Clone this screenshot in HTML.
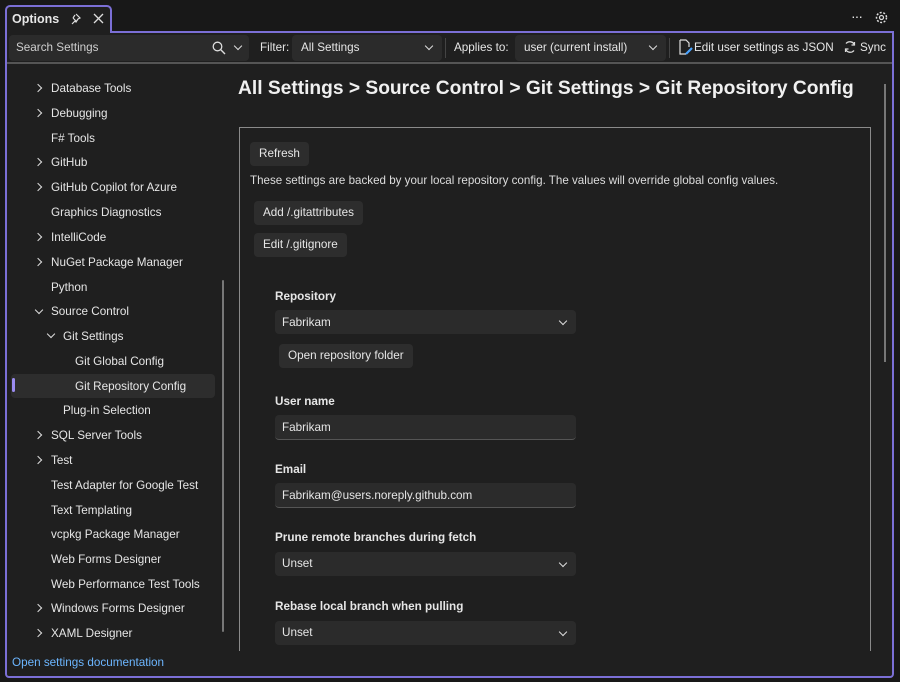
<!DOCTYPE html>
<html><head><style>
*{box-sizing:border-box;margin:0;padding:0}
body{width:900px;height:682px;background:#181818;font-family:"Liberation Sans",sans-serif;color:#e6e6e6;font-size:11.7px;position:relative;overflow:hidden}
.a{position:absolute;white-space:nowrap}
.frame{position:absolute;left:5px;top:31px;width:889px;height:647px;border:2px solid #7b6fd6;background:#1f1f1f;border-radius:0 0 4px 4px}
.tab{position:absolute;left:5px;top:5px;width:107px;height:28px;border:2px solid #7b6fd6;border-bottom:none;background:#1f1f1f;border-radius:5px 5px 0 0;z-index:2}
.box{position:absolute;background:#2b2b2b;border-radius:4px}
.btn{position:absolute;background:#2d2d2d;border-radius:4px;padding:0 9px;line-height:24px;height:24px}
.tree{left:51px}
.chev{position:absolute;width:6px;height:6px;border-right:1.4px solid #ddd;border-bottom:1.4px solid #ddd}
.lab{font-weight:bold;font-size:11.7px}
</style></head><body>
<div class="frame"></div>
<div class="tab"></div>
<div class="a" style="left:12px;top:12px;font-weight:bold;font-size:12.5px;z-index:3">Options</div>
<svg class="a" style="left:68px;top:12px;z-index:3" width="14" height="14" viewBox="0 0 14 14"><path d="M8 2l4 4-2 1-2 3-1-1-3 3M5 6l3 3M5 6l2-3" stroke="#ddd" fill="none" stroke-width="1.2"/></svg>
<svg class="a" style="left:93px;top:13px;z-index:3" width="11" height="11"><path d="M1 1L10 10M10 1L1 10" stroke="#ddd" stroke-width="1.3"/></svg>
<div class="a" style="left:851px;top:8px;font-size:14px;letter-spacing:-1px">···</div>
<svg class="a" style="left:875px;top:11px" width="13" height="13" viewBox="0 0 13 13"><circle cx="6.5" cy="6.5" r="2" fill="none" stroke="#ddd" stroke-width="1.2"/><circle cx="6.5" cy="6.5" r="5" fill="none" stroke="#ddd" stroke-width="1.5" stroke-dasharray="2 1.6"/></svg>
<div class="box" style="left:9px;top:35px;width:240px;height:26px"></div>
<div class="a" style="left:16px;top:41px;color:#cfcfcf">Search Settings</div>
<svg class="a" style="left:212px;top:41px" width="14" height="14"><circle cx="5.5" cy="5.5" r="4.3" fill="none" stroke="#ddd" stroke-width="1.3"/><path d="M8.8 8.8L13 13" stroke="#ddd" stroke-width="1.4"/></svg>
<div class="chev" style="left:235px;top:43px;transform:rotate(45deg)"></div>
<div class="a" style="left:260px;top:41px">Filter:</div>
<div class="box" style="left:292px;top:35px;width:150px;height:26px"></div>
<div class="a" style="left:301px;top:41px">All Settings</div>
<div class="chev" style="left:426px;top:43px;transform:rotate(45deg)"></div>
<div class="a" style="left:445px;top:38px;width:1px;height:20px;background:#444"></div>
<div class="a" style="left:454px;top:41px">Applies to:</div>
<div class="box" style="left:515px;top:35px;width:151px;height:26px"></div>
<div class="a" style="left:524px;top:41px">user (current install)</div>
<div class="chev" style="left:650px;top:43px;transform:rotate(45deg)"></div>
<div class="a" style="left:669px;top:38px;width:1px;height:20px;background:#444"></div>
<svg class="a" style="left:678px;top:39px" width="16" height="17"><path d="M2 1h6l3 3v4M2 1v14h6" stroke="#ddd" fill="none" stroke-width="1.2"/><path d="M8 15l6-6" stroke="#4aa3ff" stroke-width="2.2"/></svg>
<div class="a" style="left:694px;top:41px">Edit user settings as JSON</div>
<svg class="a" style="left:843px;top:40px" width="14" height="14"><path d="M3 3.5A5 5 0 0 1 11.5 5M11 10.5A5 5 0 0 1 2.5 9" stroke="#ddd" fill="none" stroke-width="1.3"/><path d="M11.5 2v3h-3M2.5 12V9h3" stroke="#ddd" fill="none" stroke-width="1.2"/></svg>
<div class="a" style="left:860px;top:41px">Sync</div>
<div class="a" style="left:7px;top:62px;width:885px;height:2px;background:#555"></div>
<div class="chev" style="left:35px;top:85px;transform:rotate(-45deg)"></div><div class="a tree" style="top:82px">Database Tools</div>
<div class="chev" style="left:35px;top:110px;transform:rotate(-45deg)"></div><div class="a tree" style="top:107px">Debugging</div>
<div class="a tree" style="top:132px">F# Tools</div>
<div class="chev" style="left:35px;top:159px;transform:rotate(-45deg)"></div><div class="a tree" style="top:156px">GitHub</div>
<div class="chev" style="left:35px;top:184px;transform:rotate(-45deg)"></div><div class="a tree" style="top:181px">GitHub Copilot for Azure</div>
<div class="a tree" style="top:206px">Graphics Diagnostics</div>
<div class="chev" style="left:35px;top:234px;transform:rotate(-45deg)"></div><div class="a tree" style="top:231px">IntelliCode</div>
<div class="chev" style="left:35px;top:259px;transform:rotate(-45deg)"></div><div class="a tree" style="top:256px">NuGet Package Manager</div>
<div class="a tree" style="top:281px">Python</div>
<div class="chev" style="left:36px;top:307px;transform:rotate(45deg)"></div><div class="a tree" style="top:305px">Source Control</div>
<div class="chev" style="left:48px;top:331px;transform:rotate(45deg)"></div><div class="a" style="left:63px;top:330px">Git Settings</div>
<div class="a" style="left:75px;top:355px">Git Global Config</div>
<div class="a" style="left:11px;top:374px;width:204px;height:24px;background:#2d2d2d;border-radius:4px"></div>
<div class="a" style="left:12px;top:378px;width:3px;height:14px;background:#9b8cf0;border-radius:2px"></div>
<div class="a" style="left:75px;top:380px">Git Repository Config</div>
<div class="a" style="left:63px;top:404px">Plug-in Selection</div>
<div class="chev" style="left:35px;top:432px;transform:rotate(-45deg)"></div><div class="a tree" style="top:429px">SQL Server Tools</div>
<div class="chev" style="left:35px;top:457px;transform:rotate(-45deg)"></div><div class="a tree" style="top:454px">Test</div>
<div class="a tree" style="top:479px">Test Adapter for Google Test</div>
<div class="a tree" style="top:504px">Text Templating</div>
<div class="a tree" style="top:528px">vcpkg Package Manager</div>
<div class="a tree" style="top:553px">Web Forms Designer</div>
<div class="a tree" style="top:578px">Web Performance Test Tools</div>
<div class="chev" style="left:35px;top:605px;transform:rotate(-45deg)"></div><div class="a tree" style="top:602px">Windows Forms Designer</div>
<div class="chev" style="left:35px;top:630px;transform:rotate(-45deg)"></div><div class="a tree" style="top:627px">XAML Designer</div>
<div class="a" style="left:222px;top:280px;width:2px;height:352px;background:#777;border-radius:1px"></div>
<div class="a" style="left:12px;top:656px;color:#6cb6ff">Open settings documentation</div>
<div class="a" style="left:238px;top:78px;font-size:19.2px;font-weight:bold;color:#f0f0f0">All Settings &gt; Source Control &gt; Git Settings &gt; Git Repository Config</div>
<div class="a" style="left:884px;top:84px;width:2px;height:278px;background:#777"></div>
<div class="a" style="left:239px;top:127px;width:632px;height:524px;border:1.5px solid #8a8a8a;border-bottom:none"></div>
<div class="btn" style="left:250px;top:142px">Refresh</div>
<div class="a" style="left:250px;top:174px;font-size:11.6px;color:#ddd">These settings are backed by your local repository config. The values will override global config values.</div>
<div class="btn" style="left:254px;top:201px">Add /.gitattributes</div>
<div class="btn" style="left:254px;top:233px">Edit /.gitignore</div>
<div class="a lab" style="left:275px;top:290px">Repository</div>
<div class="box" style="left:275px;top:310px;width:301px;height:24px"></div>
<div class="a" style="left:282px;top:316px">Fabrikam</div>
<div class="chev" style="left:560px;top:318px;transform:rotate(45deg)"></div>
<div class="btn" style="left:279px;top:344px">Open repository folder</div>
<div class="a lab" style="left:275px;top:395px">User name</div>
<div class="box" style="left:275px;top:415px;width:301px;height:25px;border-bottom:1px solid #555"></div>
<div class="a" style="left:282px;top:421px">Fabrikam</div>
<div class="a lab" style="left:275px;top:463px">Email</div>
<div class="box" style="left:275px;top:483px;width:301px;height:25px;border-bottom:1px solid #555"></div>
<div class="a" style="left:282px;top:489px">Fabrikam@users.noreply.github.com</div>
<div class="a lab" style="left:275px;top:531px">Prune remote branches during fetch</div>
<div class="box" style="left:275px;top:552px;width:301px;height:24px"></div>
<div class="a" style="left:282px;top:557px">Unset</div>
<div class="chev" style="left:560px;top:560px;transform:rotate(45deg)"></div>
<div class="a lab" style="left:275px;top:600px">Rebase local branch when pulling</div>
<div class="box" style="left:275px;top:621px;width:301px;height:24px"></div>
<div class="a" style="left:282px;top:626px">Unset</div>
<div class="chev" style="left:560px;top:629px;transform:rotate(45deg)"></div>
</body></html>
